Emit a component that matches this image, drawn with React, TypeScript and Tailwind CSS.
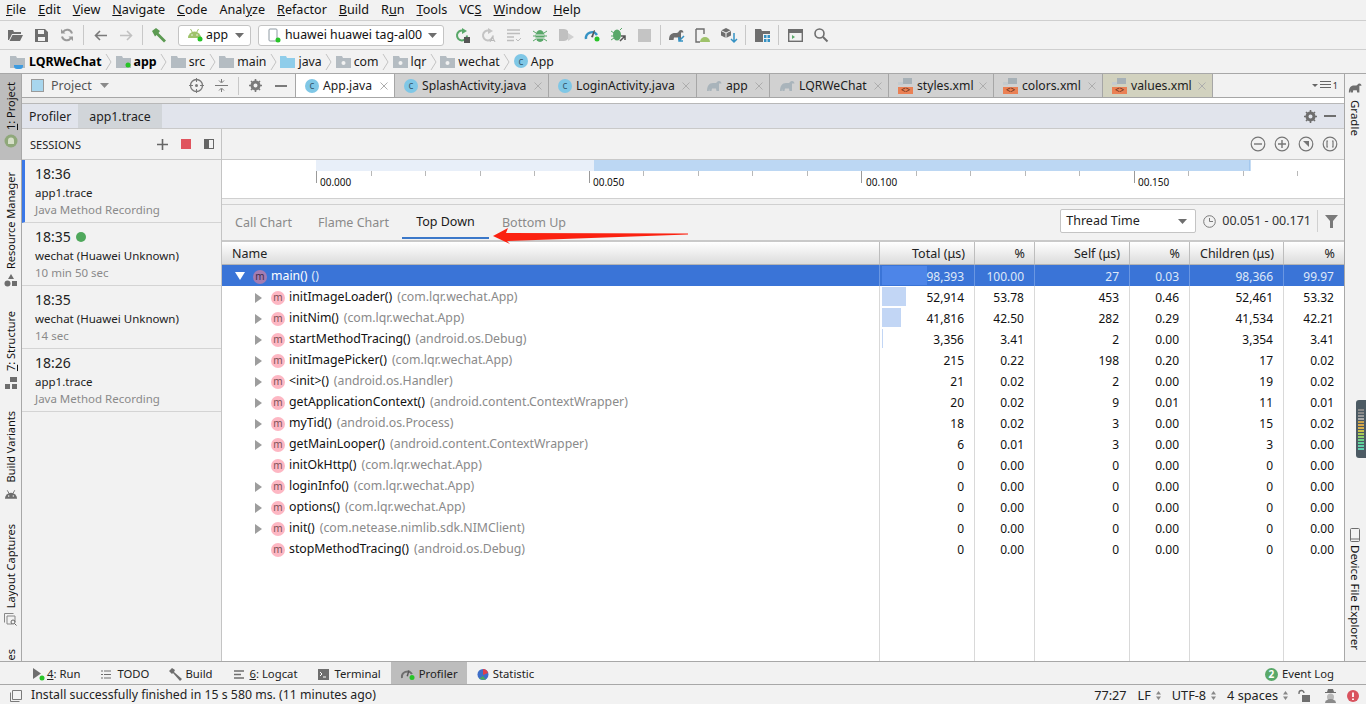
import type { ReactNode } from 'react';

const MENUS: [string, string, string][] = [
  ['', 'F', 'ile'], ['', 'E', 'dit'], ['', 'V', 'iew'], ['', 'N', 'avigate'], ['', 'C', 'ode'],
  ['Anal', 'y', 'ze'], ['', 'R', 'efactor'], ['', 'B', 'uild'], ['R', 'u', 'n'], ['', 'T', 'ools'],
  ['VC', 'S', ''], ['', 'W', 'indow'], ['', 'H', 'elp'],
];

const ROWS: [string, string, string, string, string, string, string, string, number, boolean][] = [
  ['initImageLoader()', '(com.lqr.wechat.App)', '52,914', '53.78', '453', '0.46', '52,461', '53.32', 24, true],
  ['initNim()', '(com.lqr.wechat.App)', '41,816', '42.50', '282', '0.29', '41,534', '42.21', 19, true],
  ['startMethodTracing()', '(android.os.Debug)', '3,356', '3.41', '2', '0.00', '3,354', '3.41', 1, true],
  ['initImagePicker()', '(com.lqr.wechat.App)', '215', '0.22', '198', '0.20', '17', '0.02', 0, true],
  ['<init>()', '(android.os.Handler)', '21', '0.02', '2', '0.00', '19', '0.02', 0, true],
  ['getApplicationContext()', '(android.content.ContextWrapper)', '20', '0.02', '9', '0.01', '11', '0.01', 0, true],
  ['myTid()', '(android.os.Process)', '18', '0.02', '3', '0.00', '15', '0.02', 0, true],
  ['getMainLooper()', '(android.content.ContextWrapper)', '6', '0.01', '3', '0.00', '3', '0.00', 0, true],
  ['initOkHttp()', '(com.lqr.wechat.App)', '0', '0.00', '0', '0.00', '0', '0.00', 0, false],
  ['loginInfo()', '(com.lqr.wechat.App)', '0', '0.00', '0', '0.00', '0', '0.00', 0, true],
  ['options()', '(com.lqr.wechat.App)', '0', '0.00', '0', '0.00', '0', '0.00', 0, true],
  ['init()', '(com.netease.nimlib.sdk.NIMClient)', '0', '0.00', '0', '0.00', '0', '0.00', 0, true],
  ['stopMethodTracing()', '(android.os.Debug)', '0', '0.00', '0', '0.00', '0', '0.00', 0, false],
];

const SESSIONS = [
  { time: '18:36', name: 'app1.trace', sub: 'Java Method Recording', active: true, live: false },
  { time: '18:35', name: 'wechat (Huawei Unknown)', sub: '10 min 50 sec', active: false, live: true },
  { time: '18:35', name: 'wechat (Huawei Unknown)', sub: '14 sec', active: false, live: false },
  { time: '18:26', name: 'app1.trace', sub: 'Java Method Recording', active: false, live: false },
];

function Svg({ w = 16, h = 16, vb, children }: { w?: number; h?: number; vb?: string; children: ReactNode }) {
  return (
    <svg width={w} height={h} viewBox={vb ?? `0 0 ${w} ${h}`} className="shrink-0 overflow-visible">
      {children}
    </svg>
  );
}

function ClassIcon() {
  return (
    <span className="flex h-[14px] w-[14px] shrink-0 items-center justify-center rounded-full bg-[#7fc7e6] pb-px text-[10px] leading-none text-[#35586e]">
      c
    </span>
  );
}

function Elephant({ color = '#a9b4bb', w = 16 }: { color?: string; w?: number }) {
  return (
    <Svg w={w} h={12} vb="0 0 16 12">
      <path
        d="M1 11 C1 6 3 3 7 3 C9 3 10 3.500 11 2 C12 .6 14 .6 15 2 L15.500 3.500 L13 3.500 L13 11 L10.500 11 L10 8.500 L6 8.500 L5.500 11 L3.500 11 L3 8.500 L2.800 11 Z"
        fill={color}
      />
    </Svg>
  );
}

function XmlIcon() {
  return (
    <span className="relative block h-[16px] w-[15px] shrink-0">
      <span className="absolute left-[5px] top-0 h-[6px] w-[9px] bg-[#a7b1b7]" />
      <span className="absolute left-0 top-[4px] h-[3px] w-[5px] bg-[#c4cbcf]" />
      <span className="absolute bottom-0 left-0 flex h-[7px] w-[15px] items-center justify-center bg-[#ea8054] text-[8px] leading-none text-[#5c2c14]">
        &lt;&gt;
      </span>
    </span>
  );
}

function Folder({ color = '#b4bcc2' }: { color?: string }) {
  return (
    <Svg w={15} h={13}>
      <path d="M0 1h6l1 2h8v10H0z" fill={color} />
    </Svg>
  );
}

function PkgFolder() {
  return (
    <Svg w={15} h={13}>
      <path d="M0 1h6l1 2h8v10H0z" fill="#b4bcc2" />
      <circle cx="7.500" cy="8" r="2" fill="#f2f2f2" />
    </Svg>
  );
}

function Chevron() {
  return (
    <span className="ml-[3.5px] mr-[2.500px]">
      <Svg w={8} h={18}>
        <path d="M1 1l5 8-5 8" fill="none" stroke="#c4c4c4" />
      </Svg>
    </span>
  );
}

function Crumb({ icon, label, bold }: { icon: ReactNode; label: string; bold?: boolean }) {
  return (
    <div className="flex items-center gap-[3px]">
      {icon}
      <span className={bold ? 'pt-[2px] text-[12.4px] font-bold text-black' : 'pt-[2px] text-[#1a1a1a]'}>{label}</span>
    </div>
  );
}

function GreenDot({ x, y }: { x: number; y: number }) {
  return <circle cx={x} cy={y} r="2.500" fill="#28c428" />;
}

function AndroidHead({ color = '#9ec26a' }: { color?: string }) {
  return (
    <>
      <path d="M1 9a6.500 6.500 0 0 1 13 0z" fill={color} />
      <path d="M3.500 0l2 3.500M11.500 0l-2 3.500" stroke={color} />
      <circle cx="5" cy="6" r=".8" fill="#f2f2f2" />
      <circle cx="10" cy="6" r=".8" fill="#f2f2f2" />
    </>
  );
}

function ToolIcon({ children, w = 26 }: { children: ReactNode; w?: number }) {
  return <div className="flex h-[20px] items-center justify-center" style={{ width: w }}>{children}</div>;
}

function Sep({ h = 20 }: { h?: number }) {
  return <div className="mx-[3px] w-px shrink-0 bg-[#c8c8c8]" style={{ height: h }} />;
}

function Tab({ label, icon, width, selected, tint }: { label: string; icon: ReactNode; width: number; selected?: boolean; tint?: boolean }) {
  return (
    <div
      className={`flex h-full shrink-0 items-center border-r border-[#a6a6a6] pl-[9px] ${selected ? 'bg-white' : tint ? 'bg-[#d2d2bf]' : 'bg-[#d1d1d1]'}`}
      style={{ width }}
    >
      {icon}
      <span className="ml-[4px] pt-[2px] text-[#1c1c1c]">{label}</span>
      <span className="ml-auto mr-[6px]">
        <Svg w={8} h={8}><path d="M.5.5l7 7M7.500.5l-7 7" stroke="#adadad" /></Svg>
      </span>
    </div>
  );
}

function MethodIcon({ dark }: { dark?: boolean }) {
  return (
    <span
      className={`flex h-[14px] w-[14px] shrink-0 items-center justify-center rounded-full pb-px text-[10px] leading-none ${dark ? 'bg-[#a47cb2] text-[#3d2c4a]' : 'bg-[#fdb7c3] text-[#7d5058]'}`}
    >
      m
    </span>
  );
}

function VLabel({ children, className = '' }: { children: ReactNode; className?: string }) {
  return <span className={`rotate-180 whitespace-nowrap text-[11px] text-[#111] [writing-mode:vertical-rl] ${className}`}>{children}</span>;
}

function CircleBtn({ children }: { children: ReactNode }) {
  return (
    <Svg w={16} h={16}>
      <circle cx="8" cy="8" r="6.800" fill="none" stroke="#767676" strokeWidth="1.200" />
      {children}
    </Svg>
  );
}

function UpDown() {
  return <Svg w={5} h={9}><path d="M0 3.500L2.500 0 5 3.500zM0 5.500L2.500 9 5 5.500z" fill="#888" /></Svg>;
}

const COL_WIDTHS = ['w-[95px]', 'w-[60px]', 'w-[95px]', 'w-[60px]', 'w-[94px]', 'w-[60px]'];
const COL_HEADS = ['Total (μs)', '%', 'Self (μs)', '%', 'Children (μs)', '%'];

function Row({ row }: { row: (typeof ROWS)[number] }) {
  const [name, cls, a, b, c, d, e, f, bar, expandable] = row;
  const vals = [a, b, c, d, e, f];
  return (
    <div className="flex h-[21px] items-center text-[#111]">
      <div className="flex h-full min-w-0 flex-1 items-center border-r border-[#d9d9d9] pl-[32px] pt-[2px] text-[12.3px]">
        <span className="w-[17px] shrink-0">
          {expandable && (
            <Svg w={9} h={10}>
              <path d="M1 0l7 5-7 5z" fill="#9d9d9d" />
            </Svg>
          )}
        </span>
        <MethodIcon />
        <span className="ml-[4px] whitespace-nowrap">{name}</span>
        <span className="ml-[5px] whitespace-nowrap text-[#8a8a8a]">{cls}</span>
      </div>
      {vals.map((v, i) => (
        <div key={i} className={`relative flex h-full items-center justify-end pr-[10px] pt-[2px] ${COL_WIDTHS[i]} ${i < 5 ? 'border-r border-[#d9d9d9]' : ''}`}>
          {i === 0 && bar > 0 && <span className="absolute bottom-px left-[2px] top-px bg-[#c2d6f5]" style={{ width: bar }} />}
          <span className="relative">{v}</span>
        </div>
      ))}
    </div>
  );
}

export default function App() {
  const ticks = Array.from({ length: 20 }, (_, i) => 94 + i * 54.500);
  return (
    <div className="relative flex h-[704px] w-[1366px] flex-col overflow-hidden bg-[#f2f2f2] font-['Noto_Sans','Open_Sans',sans-serif] text-[12px] leading-none text-[#111]">
      {/* menu */}
      <div className="flex h-[21px] shrink-0 items-center border-b border-[#cfcfcf] text-[12.6px]">
        {MENUS.map(([pre, key, post]) => (
          <span key={pre + key + post} className="ml-[6px] mr-[6px] text-[#111]">
            {pre}<u>{key}</u>{post}
          </span>
        ))}
      </div>

      {/* toolbar */}
      <div className="flex h-[29px] shrink-0 items-center border-b border-[#cfcfcf] pl-[2px]">
        <ToolIcon>
          <Svg w={15} h={12}><path d="M0 1h5l1 2h7v2H4L1 11H0zM4.500 6H15l-3 6H1.500z" fill="#6e6e6e" /></Svg>
        </ToolIcon>
        <ToolIcon>
          <Svg w={13} h={13}><path d="M0 0h10l3 3v10H0zM3 1v4h6V1zM3 8v4h7V8z" fill="#6e6e6e" fillRule="evenodd" /></Svg>
        </ToolIcon>
        <ToolIcon>
          <Svg w={14} h={14}>
            <path d="M12 5.500A5 5 0 0 0 3 4M2 8.500A5 5 0 0 0 11 10" fill="none" stroke="#9a9a9a" strokeWidth="2" />
            <path d="M1 1v4.500h4.500zM13 13V8.500H8.500z" fill="#9a9a9a" />
          </Svg>
        </ToolIcon>
        <Sep />
        <ToolIcon>
          <Svg w={13} h={11}><path d="M13 5.500H2M6 1L1.500 5.500 6 10" fill="none" stroke="#7a7a7a" strokeWidth="1.600" /></Svg>
        </ToolIcon>
        <ToolIcon>
          <Svg w={13} h={11}><path d="M0 5.500h11M7 1l4.500 4.500L7 10" fill="none" stroke="#c0c0c0" strokeWidth="1.600" /></Svg>
        </ToolIcon>
        <Sep />
        <ToolIcon>
          <Svg w={16} h={15}><path d="M1 3l4-3 4 3-1.500 2L15 12.500 13 14.500 5.500 7 4 8.500z" fill="#5c9a52" /></Svg>
        </ToolIcon>
        <div className="ml-[6px] flex h-[21px] w-[73px] items-center rounded-[3px] border border-[#c4c4c4] bg-white pl-[8px] text-[12.3px]">
          <Svg w={17} h={13}>
            <AndroidHead />
            <GreenDot x={13} y={10} />
          </Svg>
          <span className="ml-[2px]">app</span>
          <span className="ml-auto mr-[6px]"><Svg w={9} h={5}><path d="M0 0h9L4.500 5z" fill="#6e6e6e" /></Svg></span>
        </div>
        <div className="ml-[7px] flex h-[21px] w-[186px] items-center rounded-[3px] border border-[#c4c4c4] bg-white pl-[9px] text-[12.3px]">
          <Svg w={15} h={15}>
            <rect x="1" y="1" width="8" height="12" rx="1" fill="none" stroke="#8e9aa3" />
            <GreenDot x={10} y={12} />
          </Svg>
          <span className="ml-[2px] whitespace-nowrap">huawei huawei tag-al00</span>
          <span className="ml-auto mr-[6px]"><Svg w={9} h={5}><path d="M0 0h9L4.500 5z" fill="#6e6e6e" /></Svg></span>
        </div>
        <div className="ml-[5px] flex items-center">
          <ToolIcon>
            <Svg w={15} h={15}>
              <path d="M12 7.500A5 5 0 1 1 8 2.500" fill="none" stroke="#59a869" strokeWidth="2" />
              <path d="M7 0l5 3-5 3z" fill="#59a869" />
              <rect x="9" y="9" width="6" height="6" fill="#555" />
            </Svg>
          </ToolIcon>
          <ToolIcon>
            <Svg w={15} h={15}>
              <path d="M12 7.500A5 5 0 1 1 8 2.500" fill="none" stroke="#c4c4c4" strokeWidth="2" />
              <path d="M7 0l5 3-5 3z" fill="#c4c4c4" />
              <path d="M9 14l2.500-5 2.500 5M10 12.500h3" fill="none" stroke="#b8b8b8" />
            </Svg>
          </ToolIcon>
          <ToolIcon>
            <Svg w={15} h={13}><path d="M0 1h13M0 4.500h13M0 8h7M0 11.500h7" stroke="#bdbdbd" strokeWidth="1.500" /><path d="M9 10l2 2 3-3" fill="none" stroke="#bdbdbd" /></Svg>
          </ToolIcon>
          <ToolIcon>
            <Svg w={14} h={14}>
              <ellipse cx="7" cy="8" rx="4.500" ry="6" fill="#59a869" />
              <path d="M0 3l3 2M14 3l-3 2M0 8h3M14 8h-3M0 13l3-2M14 13l-3-2" stroke="#59a869" fill="none" />
              <path d="M3 7h8M3 10h8" stroke="#f2f2f2" />
            </Svg>
          </ToolIcon>
          <ToolIcon>
            <Svg w={15} h={14}><path d="M0 1h5a5 5 0 0 1 4 2v8a5 5 0 0 1-4 2H0z" fill="#c0c0c0" /><path d="M9 5l6 4-6 4z" fill="#d0d0d0" /></Svg>
          </ToolIcon>
          <ToolIcon>
            <Svg w={16} h={14}>
              <path d="M2 11A6 6 0 0 1 13 7" fill="none" stroke="#3592c4" strokeWidth="2.400" />
              <path d="M7 9l3-7 1 .500-2 7z" fill="#555" />
              <GreenDot x={13} y={11} />
            </Svg>
          </ToolIcon>
          <ToolIcon>
            <Svg w={15} h={14}>
              <ellipse cx="6" cy="7" rx="4" ry="5.500" fill="#59a869" />
              <path d="M0 3l3 2M0 8h3M0 12l3-2M9 2l2-2" stroke="#59a869" fill="none" />
              <path d="M9 13l5-5M10 8h4v4" stroke="#555" fill="none" strokeWidth="1.500" />
            </Svg>
          </ToolIcon>
          <ToolIcon>
            <Svg w={13} h={13}><rect width="13" height="13" fill="#c4c4c4" /></Svg>
          </ToolIcon>
        </div>
        <Sep />
        <ToolIcon>
          <Svg w={16} h={15}>
            <path d="M0 12C0 7 2 5 6 5c2 0 3 0 4-2 1-1.500 3-1.500 4 0l.5 1.500H12V12H9.500L9 9.500H5L4.500 12z" fill="#6e6e6e" />
            <path d="M15 8l-5 5M10 9v4h4" stroke="#3592c4" strokeWidth="1.500" fill="none" />
          </Svg>
        </ToolIcon>
        <ToolIcon>
          <Svg w={16} h={15}>
            <path d="M1 1h8v5M1 1v13h4" fill="none" stroke="#6e6e6e" strokeWidth="1.400" />
            <path d="M5 14a5 5 0 0 1 10 0z" fill="#9ec26a" />
          </Svg>
        </ToolIcon>
        <ToolIcon>
          <Svg w={16} h={15}>
            <path d="M5 0l5 2.500v5L5 10 0 7.500v-5z" fill="#6e6e6e" />
            <path d="M0 2.500L5 5l5-2.500M5 5v5" stroke="#f2f2f2" fill="none" />
            <path d="M13 5v9M10 11l3 3 3-3" stroke="#3592c4" strokeWidth="1.500" fill="none" />
          </Svg>
        </ToolIcon>
        <Sep />
        <ToolIcon>
          <Svg w={15} h={13}>
            <path d="M0 0h6l1 2h8v3H8v8H0z" fill="#6e6e6e" />
            <path d="M9 6h2.500v3H9zM12.500 6H15v3h-2.500zM9 10h2.500v3H9zM12.500 10H15v3h-2.500z" fill="#3592c4" />
          </Svg>
        </ToolIcon>
        <Sep />
        <ToolIcon>
          <Svg w={15} h={13}>
            <rect x=".7" y=".7" width="13.600" height="11.600" fill="none" stroke="#6e6e6e" strokeWidth="1.400" />
            <path d="M1 1h13v3H1z" fill="#6e6e6e" />
            <path d="M4 6l3 2-3 2z" fill="#59a869" />
          </Svg>
        </ToolIcon>
        <ToolIcon>
          <Svg w={14} h={14}>
            <circle cx="5.500" cy="5.500" r="4.500" fill="none" stroke="#6e6e6e" strokeWidth="1.600" />
            <path d="M9 9l4.500 4.500" stroke="#6e6e6e" strokeWidth="2" />
          </Svg>
        </ToolIcon>
      </div>

      {/* breadcrumb */}
      <div className="flex h-[24px] shrink-0 items-center border-b border-[#a8a8a8] pl-[10px] text-[12.3px]">
        <Crumb bold label="LQRWeChat" icon={<span className="relative block h-[14px] w-[16px]"><Folder /><span className="absolute bottom-0 left-[4px] h-[4px] w-[9px] rounded-b-[3px] bg-[#3d9be0]" /></span>} />
        <Chevron />
        <Crumb bold label="app" icon={<Svg w={15} h={13}><path d="M0 1h6l1 2h8v10H0z" fill="#b4bcc2" /><GreenDot x={12} y={10} /></Svg>} />
        <Chevron />
        <Crumb label="src" icon={<Folder />} />
        <Chevron />
        <Crumb label="main" icon={<Folder />} />
        <Chevron />
        <Crumb label="java" icon={<Folder color="#8fcdea" />} />
        <Chevron />
        <Crumb label="com" icon={<PkgFolder />} />
        <Chevron />
        <Crumb label="lqr" icon={<PkgFolder />} />
        <Chevron />
        <Crumb label="wechat" icon={<PkgFolder />} />
        <Chevron />
        <Crumb label="App" icon={<ClassIcon />} />
      </div>

      {/* middle */}
      <div className="flex min-h-0 flex-1">
        {/* left stripe */}
        <div className="flex w-[22px] shrink-0 flex-col items-center border-r border-[#a8a8a8]">
          <div className="flex h-[86px] w-full shrink-0 flex-col items-center bg-[#bdbdbd] pt-[8px]">
            <VLabel><u>1</u>: Project</VLabel>
            <span className="mt-[4px] block"><Svg w={14} h={14}><circle cx="7" cy="7" r="6.500" fill="#8fa87a" /><path d="M4 10V6.500a3 3 0 0 1 6 0V10z" fill="#d6dfc8" /></Svg></span>
          </div>
          <VLabel className="mt-[12px]">Resource Manager</VLabel>
          <span className="mt-[5px]"><Svg w={14} h={13}><path d="M7 0l3 5H4z" fill="#6e6e6e" /><circle cx="3.500" cy="9.500" r="3" fill="#6e6e6e" /><rect x="8" y="7" width="5" height="5" fill="#6e6e6e" /></Svg></span>
          <VLabel className="mt-[24px]"><u>7</u>: Structure</VLabel>
          <span className="mt-[6px]"><Svg w={12} h={12}><path d="M5 0h7v5H5zM0 7h5v5H0zM7 7h5v5H7z" fill="#6e6e6e" /></Svg></span>
          <VLabel className="mt-[22px]">Build Variants</VLabel>
          <span className="mt-[7px]"><Svg w={14} h={9} vb="0 0 15 9"><AndroidHead color="#6e6e6e" /></Svg></span>
          <VLabel className="mt-[25px]">Layout Captures</VLabel>
          <span className="mt-[5px]">
            <Svg w={13} h={13}>
              <path d="M.5.5h9M.5.5v9M3 3h8v6M3 3v8h5" fill="none" stroke="#888" />
              <circle cx="9" cy="9" r="2" fill="none" stroke="#666" />
              <path d="M10.500 10.500l2 2" stroke="#666" />
            </Svg>
          </span>
          <VLabel className="mt-[23px]">es</VLabel>
        </div>

        {/* centre */}
        <div className="flex min-w-0 flex-1 flex-col">
          {/* tool window bar + editor tabs */}
          <div className="flex h-[24px] shrink-0 items-stretch border-b border-[#a6a6a6]">
            <div className="flex w-[273px] shrink-0 items-center pl-[9px] text-[12.5px] text-[#555]">
              <span className="block h-[13px] w-[13px] border border-[#9a9a9a] bg-[#a8d6ee]" />
              <span className="ml-[7px] pt-[2px]">Project</span>
              <span className="ml-[8px]"><Svg w={9} h={5}><path d="M0 0h9L4.500 5z" fill="#8a8a8a" /></Svg></span>
              <span className="ml-[80px] flex items-center">
                <Svg w={15} h={15}>
                  <circle cx="7.500" cy="7.500" r="6" fill="none" stroke="#7a7a7a" strokeWidth="1.300" />
                  <circle cx="7.500" cy="7.500" r="1.500" fill="#7a7a7a" />
                  <path d="M7.500 0v4M7.500 11v4M0 7.500h4M11 7.500h4" stroke="#7a7a7a" />
                </Svg>
                <span className="ml-[11px]">
                  <Svg w={13} h={13}><path d="M0 6.500h13M6.500 0v3M6.500 13v-3M4 1.500l2.500 2.500L9 1.500M4 11.500L6.500 9 9 11.500" stroke="#7a7a7a" fill="none" /></Svg>
                </span>
                <span className="ml-[10px] h-[18px] w-px bg-[#c8c8c8]" />
                <span className="ml-[10px]">
                  <Svg w={13} h={13}><circle cx="6.500" cy="6.500" r="3.500" fill="none" stroke="#7a7a7a" strokeWidth="3" /><path d="M6.500 0v2M6.500 11v2M0 6.500h2M11 6.500h2M2 2l1.500 1.500M11 2L9.500 3.500M2 11l1.500-1.500M11 11L9.500 9.500" stroke="#7a7a7a" strokeWidth="1.600" /></Svg>
                </span>
                <span className="ml-[13px] h-[2px] w-[12px] bg-[#7a7a7a]" />
              </span>
            </div>
            <div className="flex min-w-0 flex-1 items-stretch border-l border-[#a6a6a6] text-[12.2px]">
              <Tab label="App.java" icon={<ClassIcon />} width={99} selected />
              <Tab label="SplashActivity.java" icon={<ClassIcon />} width={154} />
              <Tab label="LoginActivity.java" icon={<ClassIcon />} width={148} />
              <Tab label="app" icon={<Elephant />} width={73} />
              <Tab label="LQRWeChat" icon={<Elephant />} width={119} />
              <Tab label="styles.xml" icon={<XmlIcon />} width={105} />
              <Tab label="colors.xml" icon={<XmlIcon />} width={109} />
              <Tab label="values.xml" icon={<XmlIcon />} width={110} tint />
              <div className="ml-auto flex items-center gap-[2px] pr-[6px] text-[9px] text-[#333]">
                <Svg w={6} h={3}><path d="M0 0h6L3 3z" fill="#666" /></Svg>
                <Svg w={11} h={9}><path d="M0 .5h11M0 3.500h11M0 6.500h11" stroke="#666" /></Svg>
                <span>1</span>
              </div>
            </div>
          </div>
          <div className="flex h-[6px] shrink-0 border-b border-[#b8b8b8]">
            <div className="w-[168px] bg-[#e9e9e9]" />
            <div className="flex-1 bg-white" />
          </div>

          {/* profiler title */}
          <div className="flex h-[25px] shrink-0 items-center border-b border-[#c9c9c9] bg-[#e1e4ec] text-[12.3px]">
            <span className="px-[7px] pt-[2px] text-[#222]">Profiler</span>
            <span className="flex h-full items-center bg-[#d1d5d9] px-[11px] pt-[2px] text-[#222]">app1.trace</span>
            <span className="ml-auto mr-[7px]">
              <Svg w={13} h={13}><circle cx="6.500" cy="6.500" r="3.500" fill="none" stroke="#6e6e6e" strokeWidth="3" /><path d="M6.500 0v2M6.500 11v2M0 6.500h2M11 6.500h2M2 2l1.500 1.500M11 2L9.500 3.500M2 11l1.500-1.500M11 11L9.500 9.500" stroke="#6e6e6e" strokeWidth="1.600" /></Svg>
            </span>
            <span className="mr-[8px] h-[2px] w-[12px] bg-[#6e6e6e]" />
          </div>

          <div className="flex min-h-0 flex-1">
            {/* sessions */}
            <div className="flex w-[200px] shrink-0 flex-col border-r border-[#c4c4c4]">
              <div className="flex h-[31px] shrink-0 items-center border-b border-[#c9c9c9] pl-[8px] pr-[7px] text-[11px] text-[#222]">
                <span>SESSIONS</span>
                <span className="ml-auto">
                  <Svg w={11} h={11}><path d="M5.500 0v11M0 5.500h11" stroke="#666" strokeWidth="1.600" /></Svg>
                </span>
                <span className="ml-[13px] block h-[10px] w-[10px] bg-[#e0545e]" />
                <span className="ml-[13px] flex h-[10px] w-[10px] border border-[#666]">
                  <span className="h-full w-1/2 bg-[#666]" />
                </span>
              </div>
              {SESSIONS.map((s, i) => (
                <div key={i} className={`flex h-[63px] shrink-0 flex-col border-b border-[#d4d4d4] pt-[6px] ${s.active ? 'border-l-[3px] border-l-[#3b78e7] pl-[10px]' : 'pl-[13px]'}`}>
                  <div className="flex h-[15px] items-center text-[14px] text-[#222]">
                    {s.time}
                    {s.live && <span className="ml-[5px] block h-[10px] w-[10px] rounded-full bg-[#4fa85c]" />}
                  </div>
                  <div className="mt-[6px] text-[11.5px] text-[#222]">{s.name}</div>
                  <div className="mt-[5px] text-[11.5px] text-[#8a8a8a]">{s.sub}</div>
                </div>
              ))}
            </div>

            {/* profiler content */}
            <div className="flex min-w-0 flex-1 flex-col">
              <div className="flex h-[31px] shrink-0 items-center justify-end gap-[8px] border-b border-[#c9c9c9] pr-[6px]">
                <CircleBtn><path d="M4 8h8" stroke="#767676" strokeWidth="1.400" /></CircleBtn>
                <CircleBtn><path d="M4 8h8M8 4v8" stroke="#767676" strokeWidth="1.400" /></CircleBtn>
                <CircleBtn><path d="M5 5h6v6z" fill="#767676" /></CircleBtn>
                <CircleBtn><path d="M6 5H5v6h1M10 5h1v6h-1" fill="none" stroke="#767676" strokeWidth="1.200" /></CircleBtn>
              </div>
              <div className="h-[39px] shrink-0 border-b border-[#d0d0d0] bg-white">
                <svg width="1122" height="38" className="block">
                  <rect x="94" y="0" width="278" height="11" fill="#e8eff9" />
                  <rect x="372" y="0" width="656" height="11" fill="#bcd7f3" />
                  <path d="M1028 0v11" stroke="#8db9e8" />
                  {ticks.map((t, i) => (
                    <path key={i} d={`M${Math.round(t) + 0.5} 11v${i % 5 === 0 ? 12 : 5}`} stroke={i % 5 === 0 ? '#9a9a9a' : '#b8b8b8'} />
                  ))}
                  <text x="98" y="26" fontSize="10" fill="#111">00.000</text>
                  <text x="371" y="26" fontSize="10" fill="#111">00.050</text>
                  <text x="644" y="26" fontSize="10" fill="#111">00.100</text>
                  <text x="916" y="26" fontSize="10" fill="#111">00.150</text>
                </svg>
              </div>
              <div className="h-[6px] shrink-0 border-b border-[#d0d0d0]" />
              <div className="flex h-[37px] shrink-0 items-center border-b-2 border-[#c9c9c9] text-[12.5px] text-[#8a8a8a]">
                <span className="ml-[13px] pt-[2px]">Call Chart</span>
                <span className="ml-[26px] pt-[2px]">Flame Chart</span>
                <div className="ml-[13px] flex h-[34px] w-[87px] items-center justify-center self-start border-b-2 border-[#3b78c9] pt-[2px] text-[#1a1a1a]">Top Down</div>
                <span className="ml-[13px] pt-[2px]">Bottom Up</span>
                <div className="mb-[3px] ml-auto flex items-center pr-[4px]">
                  <div className="flex h-[24px] w-[136px] items-center justify-between rounded-[2px] border border-[#c4c4c4] bg-white pl-[5px] pr-[8px] text-[#222]">
                    Thread Time
                    <Svg w={9} h={5}><path d="M0 0h9L4.500 5z" fill="#6e6e6e" /></Svg>
                  </div>
                  <span className="ml-[7px]">
                    <Svg w={13} h={13}><circle cx="6.500" cy="6.500" r="5.800" fill="none" stroke="#7a7a7a" /><path d="M6.500 3v3.500H10" fill="none" stroke="#7a7a7a" /></Svg>
                  </span>
                  <span className="ml-[6px] text-[#333]">00.051 - 00.171</span>
                  <span className="ml-[6px] h-[22px] w-px bg-[#d0d0d0]" />
                  <span className="ml-[7px]">
                    <Svg w={15} h={13}><path d="M0 0h13L8 6v7H5V6z" fill="#7a7a7a" /></Svg>
                  </span>
                </div>
              </div>

              {/* table header */}
              <div className="flex h-[23px] shrink-0 items-center border-b border-[#b4b4b4] bg-gradient-to-b from-white to-[#dcdcdc] text-[12.5px] text-[#222]">
                <div className="flex h-full flex-1 items-center border-r border-[#bdbdbd] pl-[10px] pt-[2px]">Name</div>
                {COL_HEADS.map((h, i) => (
                  <div key={i} className={`flex h-full items-center justify-end pr-[9px] pt-[2px] ${COL_WIDTHS[i]} ${i < 5 ? 'border-r border-[#bdbdbd]' : ''}`}>{h}</div>
                ))}
              </div>

              {/* table */}
              <div className="flex min-h-0 flex-1 flex-col bg-white">
                <div className="flex h-[21px] items-center bg-[#3a74d7] text-[#dfe8f8]">
                  <div className="flex h-full min-w-0 flex-1 items-center border-r border-[#6a97e2] pl-[13px] pt-[2px] text-[12.3px]">
                    <span className="w-[18px] shrink-0"><Svg w={10} h={9}><path d="M0 0h10L5 8z" fill="#fff" /></Svg></span>
                    <MethodIcon dark />
                    <span className="ml-[4px] text-white">main()</span>
                    <span className="ml-[4px]">()</span>
                  </div>
                  {['98,393', '100.00', '27', '0.03', '98,366', '99.97'].map((v, i) => (
                    <div key={i} className={`relative flex h-full items-center justify-end pr-[10px] pt-[2px] ${COL_WIDTHS[i]} ${i < 5 ? 'border-r border-[#6a97e2]' : ''}`}>
                      {i === 0 && <span className="absolute bottom-px left-[2px] top-px w-[45px] bg-[#4d85e8]" />}
                      <span className="relative">{v}</span>
                    </div>
                  ))}
                </div>
                {ROWS.map((r) => <Row key={r[0]} row={r} />)}
                <div className="flex flex-1">
                  <div className="flex-1 border-r border-[#d9d9d9]" />
                  {COL_WIDTHS.map((w, i) => (
                    <div key={i} className={`${w} ${i < 5 ? 'border-r border-[#d9d9d9]' : ''}`} />
                  ))}
                </div>
              </div>
            </div>
          </div>
        </div>

        {/* right stripe */}
        <div className="flex w-[22px] shrink-0 flex-col items-center border-l border-[#a8a8a8] pr-px pt-[8px] text-[11.5px]">
          <Elephant color="#6e6e6e" w={14} />
          <span className="mt-[6px] whitespace-nowrap text-[#111] [writing-mode:vertical-rl]">Gradle</span>
          <span className="mt-[392px]">
            <Svg w={10} h={14}><rect x=".5" y=".5" width="9" height="13" rx="1" fill="none" stroke="#6e6e6e" /><path d="M1 11h8" stroke="#6e6e6e" /></Svg>
          </span>
          <span className="mt-[3px] whitespace-nowrap text-[#111] [writing-mode:vertical-rl]">Device File Explorer</span>
        </div>
      </div>

      {/* tool window buttons */}
      <div className="flex h-[23px] shrink-0 items-center border-t border-[#a8a8a8] pl-[33px] pt-[2px] text-[11.3px] text-[#222]">
        <Svg w={13} h={13}><path d="M0 0l8 5.500L0 11z" fill="#6e6e6e" /><GreenDot x={9} y={10} /></Svg>
        <span className="ml-px"><u>4</u>: Run</span>
        <span className="ml-[21px]"><Svg w={10} h={9}><path d="M0 1h2M3 1h7M0 4.500h2M3 4.500h7M0 8h2M3 8h7" stroke="#6e6e6e" /></Svg></span>
        <span className="ml-[6px]">TODO</span>
        <span className="ml-[20px]"><Svg w={13} h={13}><path d="M0 3l3-3 3 2-1 2 8 7-2 2-7-8-1 1z" fill="#6e6e6e" /></Svg></span>
        <span className="ml-[3px]">Build</span>
        <span className="ml-[21px]"><Svg w={10} h={9}><path d="M0 1h10M0 4.500h7M0 8h10" stroke="#6e6e6e" strokeWidth="1.300" /></Svg></span>
        <span className="ml-[6px]"><u>6</u>: Logcat</span>
        <span className="ml-[21px]"><Svg w={11} h={11}><rect width="11" height="11" fill="#6e6e6e" /><path d="M2 3l2 2-2 2M5 8h3" stroke="#fff" fill="none" /></Svg></span>
        <span className="ml-[5px]">Terminal</span>
        <div className="-mt-[2px] ml-[10px] flex h-[22px] w-[76px] items-center bg-[#bdbdbd] pl-[10px] pt-[2px]">
          <Svg w={14} h={12}>
            <path d="M1 10A5.500 5.500 0 0 1 11 6" fill="none" stroke="#6e6e6e" strokeWidth="2" />
            <path d="M5.500 8l2-6 1 .500-1.500 6z" fill="#555" />
            <GreenDot x={11} y={9.500} />
          </Svg>
          <span className="ml-[4px]">Profiler</span>
        </div>
        <span className="ml-[10px]">
          <Svg w={12} h={13}>
            <circle cx="6" cy="6.500" r="5.500" fill="#3f6fc8" />
            <path d="M6 1a5.500 5.500 0 0 1 5 4L6 7z" fill="#e0404a" />
            <path d="M2 11l4-3 3 4z" fill="#4aa85c" />
          </Svg>
        </span>
        <span className="ml-[4px]">Statistic</span>
        <div className="ml-auto mr-[32px] flex items-center">
          <span className="flex h-[13px] w-[13px] items-center justify-center rounded-full bg-[#59a869] text-[10px] font-bold text-white">2</span>
          <span className="ml-[4px]">Event Log</span>
        </div>
      </div>

      {/* status bar */}
      <div className="flex h-[20px] shrink-0 items-center border-t border-[#a8a8a8] pl-[10px] pt-[2px] text-[12.3px] text-[#222]">
        <Svg w={12} h={12}><path d="M.5 2.500v9h9M2.500 .5h9v9h-9z" fill="none" stroke="#7a7a7a" /></Svg>
        <span className="ml-[9px]">Install successfully finished in 15 s 580 ms. (11 minutes ago)</span>
        <div className="ml-auto flex items-center pr-[7px] text-[12.7px]">
          <span>77:27</span>
          <span className="ml-[11px]">LF</span>
          <span className="ml-[5px]"><UpDown /></span>
          <span className="ml-[11px]">UTF-8</span>
          <span className="ml-[5px]"><UpDown /></span>
          <span className="ml-[11px]">4 spaces</span>
          <span className="ml-[5px]"><UpDown /></span>
          <span className="ml-[10px]">
            <Svg w={12} h={12}><path d="M1 4V3a2.500 2.500 0 0 1 5 0" fill="none" stroke="#6e6e6e" strokeWidth="1.300" /><rect x="4" y="5" width="8" height="7" fill="#6e6e6e" /></Svg>
          </span>
          <span className="ml-[14px]">
            <Svg w={13} h={14}>
              <path d="M3 3l1-3h5l1 3h2v1H1V3z" fill="#6e6e6e" />
              <circle cx="6.500" cy="8" r="3.500" fill="#b8b8b8" />
              <path d="M1 14a5.500 4 0 0 1 11 0z" fill="#8a8a8a" />
            </Svg>
          </span>
          <span className="ml-[10px]">
            <Svg w={12} h={12}>
              <circle cx="6" cy="6" r="6" fill="#d9535f" />
              <path d="M6 2.500v4.500M6 8.500v1.500" stroke="#fff" strokeWidth="1.800" />
            </Svg>
          </span>
        </div>
      </div>

      {/* annotation arrow */}
      <svg width="200" height="20" className="pointer-events-none absolute left-[490px] top-[226px]">
        <path d="M3 10L18 2l-2 5 182 .5v1L17 15l3 3z" fill="#fb2110" />
      </svg>

      {/* memory indicator */}
      <div className="absolute left-[1356px] top-[400px] flex h-[58px] w-[10px] flex-col justify-center gap-px rounded-l-[3px] bg-[#4c5a63] pl-[2px]">
        {['#888', '#888', '#999', '#aaa', '#c9a24a', '#d9a84a', '#d9b04a', '#c7c04a', '#a9c858', '#8fd06a', '#6fd08a', '#5fd09a', '#5fd0a8', '#5fd0b0'].map((c, i) => (
          <span key={i} className="block h-[2px] w-[6px]" style={{ background: c }} />
        ))}
      </div>
    </div>
  );
}
